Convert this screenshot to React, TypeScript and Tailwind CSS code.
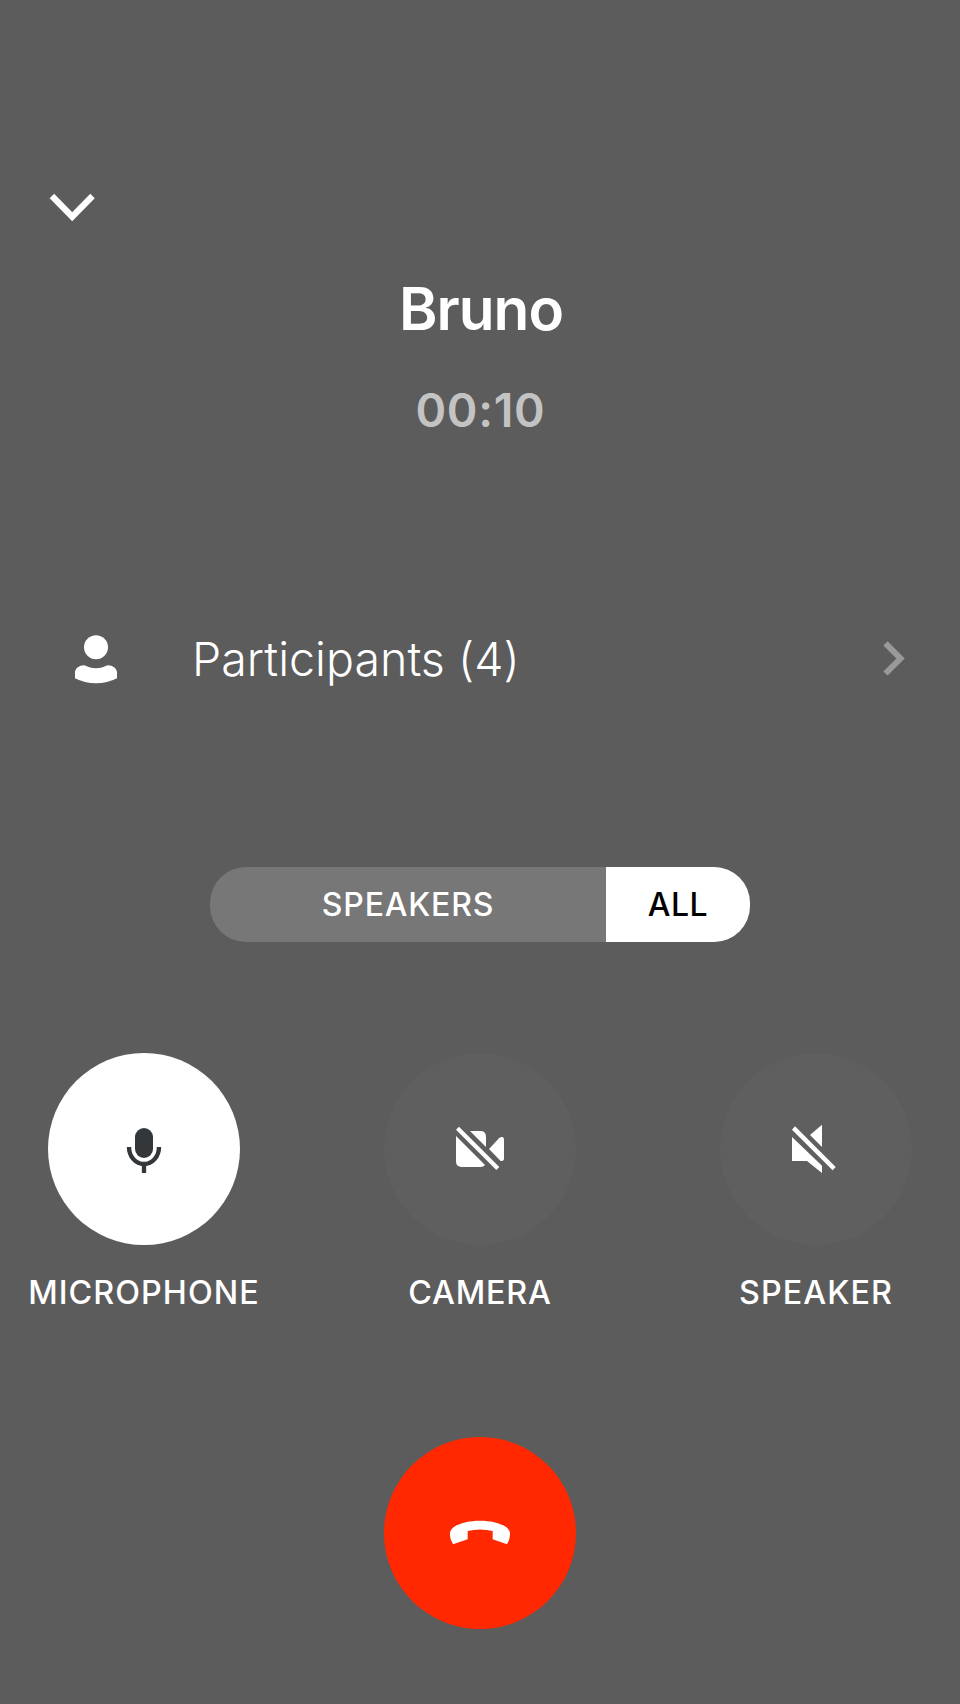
import type { ReactNode } from "react";

function Control({ label, active, tracking, children }: { label: string; active?: boolean; tracking: string; children: ReactNode }) {
  return (
    <div className="flex w-[192px] flex-col items-center">
      <button
        aria-label={label}
        className={`flex size-[192px] items-center justify-center rounded-full ${active ? "bg-white" : "bg-[#5f5f5f]"}`}
      >
        {children}
      </button>
      <span className={`mt-[28px] text-[32.300px] leading-[40px] font-medium whitespace-nowrap ${tracking}`}>{label}</span>
    </div>
  );
}

export default function App() {
  return (
    <main className="flex h-[1704px] w-[960px] flex-col overflow-hidden bg-[#5c5c5c] font-['Inter',sans-serif] text-white">
      <header className="flex h-[268px] items-end pb-[38px] pl-[42px]">
        <button aria-label="Minimize">
          <svg className="block h-[46px] w-[60px]" viewBox="0 0 60 46" fill="none" stroke="currentColor" strokeWidth="6.3">
            <path d="M9.9 12 30.2 32.700 50.500 12" />
          </svg>
        </button>
      </header>

      <section className="flex flex-col items-center">
        <h1 className="mt-[6px] pl-[2px] text-[58.5px] leading-[70px] font-semibold tracking-[-1px]">Bruno</h1>
        <p className="mt-[38px] pl-[1px] text-[46.5px] leading-[56px] font-semibold tracking-[0.7px] text-[#c3c3c3]">00:10</p>
      </section>

      <button className="mt-[172px] flex h-[98px] items-center pr-[52px] pl-[66px] text-left">
        <svg className="h-[60px] w-[60px] shrink-0" viewBox="18 26 180 180" fill="currentColor">
          <circle cx="108" cy="81" r="36" />
          <path d="M45 155C46 145 58 135 72 135C80 135 84 144 108 144C132 144 136 135 144 135C158 135 170 145 171 155V174Q142 189 108 189Q74 189 45 174Z" />
        </svg>
        <span className="ml-[66px] flex-1 text-[46.5px] leading-[56px] font-light tracking-[0.03px]">Participants (4)</span>
        <svg className="h-[40px] w-[30px] shrink-0" viewBox="0 0 30 40" fill="none" stroke="#999" strokeWidth="6">
          <path d="M7.500 4.300 22.500 19.500 7.500 34.500" />
        </svg>
      </button>

      <div className="mt-[159px] flex h-[75px] w-[540px] self-center overflow-hidden rounded-[36px] bg-[#777] text-[32px] font-medium">
        <button className="flex w-[396px] items-center justify-center tracking-[0.8px]">SPEAKERS</button>
        <button className="flex flex-1 items-center justify-center bg-white tracking-[0.5px] text-black">ALL</button>
      </div>

      <section className="mt-[111px] flex justify-between px-[48px]">
        <Control label="MICROPHONE" active tracking="tracking-[1.05px]">
          <svg className="h-[80px] w-[90px]" viewBox="-3 -3 270 240" fill="#33373a">
            <rect x="105" y="54" width="54" height="90" rx="27" />
            <path d="M87 111C87 140 107 162 132 162S177 140 177 111" fill="none" stroke="#33373a" strokeWidth="13" />
            <path d="M125.500 162h13v27h-13z" />
          </svg>
        </Control>
        <Control label="CAMERA" tracking="tracking-[0.8px]">
          <svg className="h-[80px] w-[90px]" viewBox="0 -3 270 240" fill="currentColor">
            <path d="M63 78 150 165Q146 171 136 171H80Q63 171 63 154Z" />
            <path d="M105 63H136Q153 63 153 80V111Z" />
            <path d="M162 117 192 85Q197 80 203 81Q207 83 207 89V145Q207 153 200 153H197Z" />
            <path d="M63 59 72 50 193 171 184 180Z" />
          </svg>
        </Control>
        <Control label="SPEAKER" tracking="tracking-[1.05px]">
          <svg className="h-[80px] w-[90px]" viewBox="3 -3 270 240" fill="currentColor">
            <path d="M66 81 156 167V189L111 153H66Z" />
            <path d="M120 75 156 44V111Z" />
            <path d="M66 59 75 49 197 171 188 181Z" />
          </svg>
        </Control>
      </section>

      <button aria-label="End call" className="mt-[124px] flex size-[192px] items-center justify-center self-center rounded-full bg-[#ff2800]">
        <svg className="h-[60px] w-[90px]" viewBox="0 -6 270 180" fill="currentColor">
          <path d="M45 83C48 63 86 47 135 47S222 63 225 83Q226 102 216 118L173 103V78Q135 69 98 78V103L54 118Q43 101 45 83Z" />
        </svg>
      </button>
    </main>
  );
}
